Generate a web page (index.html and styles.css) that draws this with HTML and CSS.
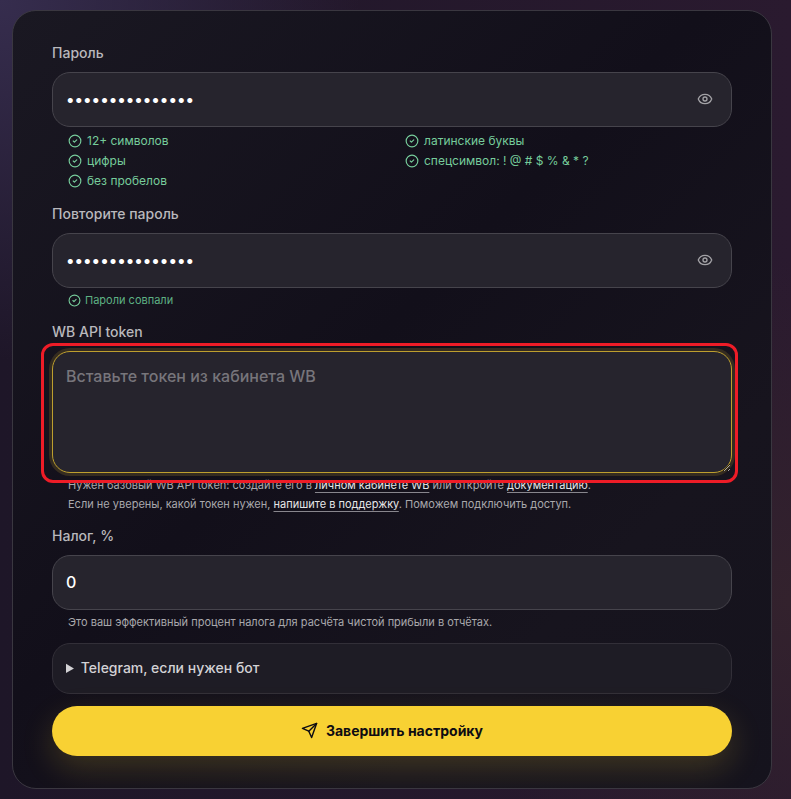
FILE: index.html
```html
<!DOCTYPE html>
<html lang="ru">
<head>
  <meta charset="UTF-8" />
  <meta name="viewport" content="width=device-width, initial-scale=1.0" />
  <title>Настройка аккаунта</title>
  <link rel="stylesheet" href="styles.css">
</head>
<body>

  <!-- Shared icons -->
  <svg class="sprite" aria-hidden="true">
    <symbol id="icon-check" viewBox="0 0 24 24">
      <circle cx="12" cy="12" r="10" />
      <path d="m9 12 2 2 4-4" />
    </symbol>
    <symbol id="icon-eye" viewBox="0 0 24 24">
      <path d="M2.06 12.35a1 1 0 0 1 0-.7 10.75 10.75 0 0 1 19.88 0 1 1 0 0 1 0 .7 10.75 10.75 0 0 1-19.88 0" />
      <circle cx="12" cy="12" r="3" />
    </symbol>
    <symbol id="icon-send" viewBox="0 0 24 24">
      <path d="M22 2 15 22l-4-9-9-4Z" />
      <path d="M22 2 11 13" />
    </symbol>
  </svg>

  <main class="page">
    <form class="card">

      <!-- Password -->
      <div class="field">
        <label for="password">Пароль</label>
        <div class="input-wrap">
          <input class="control" type="password" id="password" value="Secret!Passw0rd">
          <button class="eye" type="button" aria-label="Показать пароль"><svg><use href="#icon-eye" /></svg></button>
        </div>
        <ul class="rules">
          <li><svg><use href="#icon-check" /></svg>12+ символов</li>
          <li><svg><use href="#icon-check" /></svg>латинские буквы</li>
          <li><svg><use href="#icon-check" /></svg>цифры</li>
          <li><svg><use href="#icon-check" /></svg>спецсимвол: ! @ # $ % &amp; * ?</li>
          <li><svg><use href="#icon-check" /></svg>без пробелов</li>
        </ul>
      </div>

      <!-- Repeat password -->
      <div class="field">
        <label for="password-repeat">Повторите пароль</label>
        <div class="input-wrap">
          <input class="control" type="password" id="password-repeat" value="Secret!Passw0rd">
          <button class="eye" type="button" aria-label="Показать пароль"><svg><use href="#icon-eye" /></svg></button>
        </div>
        <p class="match"><svg><use href="#icon-check" /></svg>Пароли совпали</p>
      </div>

      <!-- Token -->
      <div class="field">
        <label for="token">WB API token</label>
        <div class="input-wrap highlight">
          <textarea class="control active" id="token" placeholder="Вставьте токен из кабинета WB"></textarea>
        </div>
        <div class="hints">
          <p>Нужен базовый WB API token: создайте его в <a href="#">личном кабинете WB</a> или откройте <a href="#">документацию</a>.</p>
          <p>Если не уверены, какой токен нужен, <a href="#">напишите в поддержку</a>. Поможем подключить доступ.</p>
        </div>
      </div>

      <!-- Tax -->
      <div class="field">
        <label for="tax">Налог, %</label>
        <input class="control" type="text" inputmode="decimal" id="tax" value="0">
        <div class="hints">
          <p>Это ваш эффективный процент налога для расчёта чистой прибыли в отчётах.</p>
        </div>
      </div>

      <details class="extra">
        <summary>Telegram, если нужен бот</summary>
      </details>

      <button class="submit" type="submit"><svg><use href="#icon-send" /></svg>Завершить настройку</button>
    </form>
  </main>

</body>
</html>
```

FILE: styles.css
```css
* { margin: 0; padding: 0; box-sizing: border-box; }
body {
  min-height: 100vh;
  background:
    radial-gradient(circle at 0 0, #362d4e 0, rgba(54, 45, 78, 0) 360px),
    radial-gradient(circle at 100% 75%, #33222d 0, rgba(51, 34, 45, 0) 340px),
    linear-gradient(90deg, #1e1628, #2a1a2f);
  color: #fff;
  font-family: Inter, sans-serif;
}
svg {
  fill: none;
  stroke: currentColor;
  stroke-width: 2;
  stroke-linecap: round;
  stroke-linejoin: round;
  flex-shrink: 0;
}
.sprite {
  position: absolute;
  width: 0;
  height: 0;
}
.page {
  padding: 10px 19px 10px 12px;
}
.card {
  display: flex;
  flex-direction: column;
  gap: 12px;
  padding: 31px 39px 32px;
  background: linear-gradient(135deg, #1a1822, #120f1a 45%, #17141e 75%, #15131d);
  border: 1px solid #3a3740;
  border-radius: 24px;
  overflow: hidden;
}

/* Fields */
.field label {
  display: block;
  margin-bottom: 8px;
  color: #b9b8bc;
  font-size: 14px;
  font-weight: 500;
  line-height: 22px;
}
.input-wrap {
  position: relative;
}
.control {
  display: block;
  width: 100%;
  height: 55px;
  padding: 0 13px 1px;
  background: #26242d;
  border: 1px solid #46444c;
  border-radius: 18px;
  outline: none;
  color: #fff;
  font-family: inherit;
  font-size: 16px;
  font-weight: 500;
}
textarea.control {
  height: 122px;
  padding: 12px 13px;
  line-height: 24px;
  resize: vertical;
}
.control::placeholder {
  color: #77757b;
}
.control.active {
  border-color: #bd9f2e;
  box-shadow: 0 0 0 3px #352c20;
}
.highlight::after {
  content: '';
  position: absolute;
  inset: -8px -6px -10px -11px;
  border: 3px solid #ee1c27;
  border-radius: 12px;
  pointer-events: none;
}
.eye {
  position: absolute;
  top: 0;
  right: 11px;
  display: flex;
  align-items: center;
  justify-content: center;
  width: 32px;
  height: 54px;
  background: none;
  border: 0;
  color: #a3a2a6;
  cursor: pointer;
}
.eye svg {
  width: 16px;
  height: 16px;
}

/* Texts under fields */
.rules {
  display: grid;
  grid-template-columns: 1fr 1fr;
  column-gap: 10px;
  padding: 4px 0 0 16px;
  list-style: none;
  color: #76cc9b;
  font-size: 12px;
  line-height: 20px;
}
.rules li,
.match {
  display: flex;
  align-items: center;
  gap: 5px;
}
.rules svg,
.match svg {
  width: 14px;
  height: 14px;
}
.match {
  gap: 4px;
  padding: 4px 0 0 16px;
  color: #5eb184;
  font-size: 11px;
  line-height: 17px;
}
.match svg {
  width: 13px;
  height: 13px;
  color: #76cc9b;
}
.hints {
  display: grid;
  gap: 2px;
  padding: 4px 0 0 16px;
  color: #a9a8ac;
  font-size: 11px;
  line-height: 17px;
}
.hints a {
  color: #e6e6e8;
  text-decoration-color: #88868d;
  text-underline-offset: 3px;
}

.extra {
  padding: 13px 13px 14px;
  background: #1e1c25;
  border: 1px solid #322f38;
  border-radius: 18px;
  color: #d3d2d5;
  font-size: 14px;
  font-weight: 500;
  line-height: 22px;
}
.extra summary {
  cursor: pointer;
}

.submit {
  display: flex;
  align-items: center;
  justify-content: center;
  gap: 8px;
  height: 50px;
  padding-bottom: 1px;
  background: #f8d133;
  border: 0;
  border-radius: 25px;
  box-shadow: 0 12px 32px rgba(248, 209, 51, 0.18);
  color: #0e0c12;
  font-family: inherit;
  font-size: 14px;
  font-weight: 700;
  cursor: pointer;
}
.submit svg {
  width: 17px;
  height: 17px;
}
```
